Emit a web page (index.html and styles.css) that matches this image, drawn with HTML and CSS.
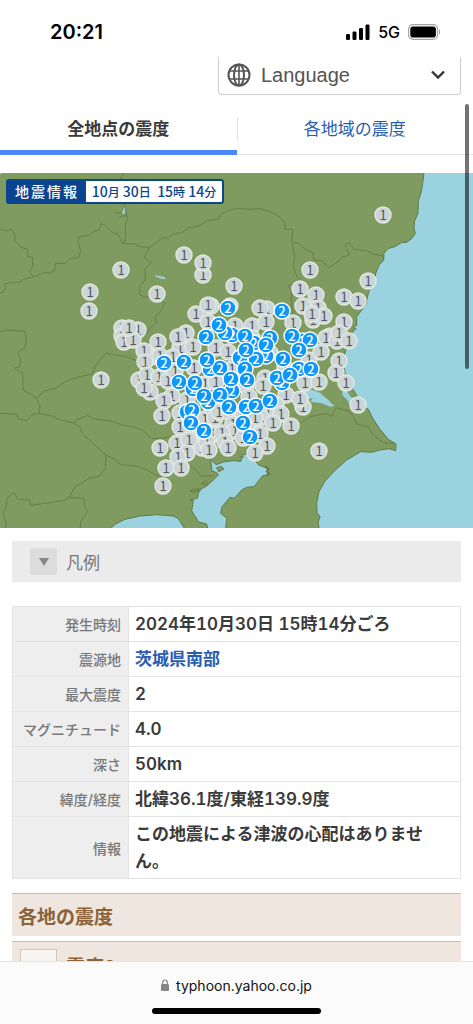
FILE: index.html
```html
<!DOCTYPE html>
<html lang="ja">
<head>
<meta charset="utf-8">
<meta name="viewport" content="width=device-width, initial-scale=1">
<title>地震情報</title>
<link rel="stylesheet" href="styles.css">
</head>
<body>

<header class="status">
  <span class="time">20:21</span>
  <div class="status-right">
    <svg width="24" height="16" viewBox="0 0 24 16">
      <rect x="0" y="10" width="4" height="6" rx="1.2"/>
      <rect x="6.5" y="7.500" width="4" height="8.500" rx="1.2"/>
      <rect x="13" y="4" width="4" height="12" rx="1.2"/>
      <rect x="19.500" y="0.500" width="4" height="15.500" rx="1.2"/>
    </svg>
    <span class="network">5G</span>
    <svg width="33" height="16" viewBox="0 0 33 16">
      <rect x="0.600" y="0.700" width="29" height="14.600" rx="4.500" fill="none" stroke="#a5a5a5" stroke-width="1.200"/>
      <rect x="2.300" y="2.400" width="25.600" height="11.200" rx="2.800"/>
      <path d="M31 5.500v5c1.600-.6 1.600-4.400 0-5z" fill="#a5a5a5"/>
    </svg>
  </div>
</header>

<main class="page">
  <div class="language">
    <svg class="globe" width="24" height="24" viewBox="0 0 24 24" fill="none" stroke="#555" stroke-width="2">
      <circle cx="12" cy="12" r="10.500"/>
      <ellipse cx="12" cy="12" rx="5" ry="10.500"/>
      <path d="M12 1.500v21M2.500 8h19M2.500 16h19" stroke-width="1.600"/>
    </svg>
    <select aria-label="Language">
      <option>Language</option>
    </select>
    <svg class="arrow" width="14" height="10" viewBox="0 0 14 10" fill="none" stroke="#333" stroke-width="2.400">
      <path d="M1 1.500l6 6 6-6"/>
    </svg>
  </div>

  <nav class="tabs">
    <a href="#" class="tab active">全地点の震度</a>
    <a href="#" class="tab">各地域の震度</a>
  </nav>

  <div class="map">
    <svg class="map-svg" viewBox="0 0 473 355">
      <rect width="473" height="355" fill="#7f9b5f"/>
      <g transform="translate(0 -3) scale(0.33333)">
        <!-- sea -->
        <g fill="#9ad3df" stroke="#5f7845" stroke-width="3">
          <path d="M1273 0L1268 40 1264 65 1255 92 1254 130 1244 152 1242 175 1246 190 1236 205 1220 217 1204 218 1184 230 1164 236 1152 250 1151 271 1138 284 1128 308 1120 340 1106 365 1098 402 1082 424 1070 440 1070 466 1060 472 1068 476 1050 494 1045 520 1036 545 1027 575 1035 605 1043 640 1060 660 1078 690 1098 715 1105 718 1118 745 1140 778 1165 808 1188 822 1187 842 1168 836 1140 840 1115 847 1082 845 1040 870 1003 903 975 933 957 965 950 998 951 1028 960 1040 955 1056 958 1090H1440V0z"/>
          <path d="M322 1085L345 1063 375 1048 420 1038 470 1034 520 1038 535 1046 545 1062 560 1085z"/>
          <path d="M625 1085L620 1062 596 1056 575 1022 580 992 570 990 592 985 598 960 620 948 640 930 655 915 650 908 636 903 632 868 648 884 670 876 700 872 722 874 728 856 738 852 755 858 775 884 805 897 803 915 788 917 762 950 740 952 725 960 703 985 690 982 665 1012 662 1030 680 1044 676 1085z"/>
          <path d="M885 665L935 660 945 662 960 668 985 690 1003 708 990 710 965 700 932 695 938 683 918 690 870 690z" stroke="none"/>
          <path d="M1028 660L1042 665 1052 680 1072 690 1060 705 1050 705 1042 690 1027 675z" stroke="none"/>
          <path d="M464 316L492 320 498 328 484 326 468 320zM372 115L376 112 374 132 366 130zM0 0h14l-14 14z" stroke="none"/>
        </g>
        <path d="M650 893l14-4 8 8-16 8zM570 962l24-6 8 5-24 6zM604 940l14-8 6 6-12 7z" fill="#7f9b5f" stroke="#5f7845" stroke-width="3"/>
        <path d="M796 888l10 8-7 8 10 8-10 4" fill="none" stroke="#5f7845" stroke-width="4"/>
        <!-- prefecture borders -->
        <g class="border">
          <path d="M371 0L370 14 360 28 374 45 380 65 381 85 368 95 376 112 382 145 376 165 377 205 371 222M345 128L365 129M358 140L382 136"/>
          <path d="M0 176L15 182 35 178 45 195 45 214 65 232 82 238 83 260 98 262 98 288 88 306 100 321"/>
          <path d="M0 368L10 366 18 352 12 342 35 338 60 336 75 326 100 321 112 317 130 308 150 309 165 300 166 280 195 280 214 265 236 263 242 242 234 218 236 200 268 196 282 183 298 180 302 160 315 166 340 190 352 190 362 208 368 220 385 222 400 220 420 230 448 233 470 218 485 204 505 204 520 192 545 188 565 174 600 166 620 152 655 148 662 132 680 124 710 115 750 118 780 116 808 125 830 134 855 158 855 178 878 178 876 218 895 220 915 236 938 248 942 270 965 272 985 293 1015 275 1025 262 1048 255 1036 226 1045 217 1062 238 1100 242 1120 252 1148 258"/>
          <path d="M448 233L432 262 454 276 436 296 435 330 418 352 420 376 440 382 468 370 494 400 482 425 465 440 468 458 446 480 430 500"/>
          <path d="M878 222L884 260 880 290 890 318 900 330M880 340L864 348 874 362 874 395 880 440"/>
          <path d="M0 486L18 480 76 484 79 510 74 536 54 545 62 568 60 590 42 594 68 610 70 660 84 668 110 686 120 710 118 730M110 686L130 664 165 656 200 632 240 620 278 612 284 590 318 549 350 556 380 560 410 572"/>
          <path d="M0 730L50 732 56 748 82 752 95 735 118 730 155 738 175 748 222 760 230 750 262 736 285 748 330 752 370 766 400 770 430 782 455 806 490 804 540 796"/>
          <path d="M222 760L240 770 246 790 265 808 318 855 316 895 300 918 270 924 240 942 225 950 208 982 250 985 254 1008 262 1025 242 1055 240 1085M318 855L350 870 362 884 410 888 440 900 478 920"/>
          <path d="M208 982L190 992 150 998 92 1006 90 990 55 988 42 968 20 985 20 1005 10 1030 18 1060 16 1085"/>
          <path d="M570 888L590 902 602 918 640 918M905 758L930 740 960 734 980 730 995 740 1003 720 1010 714 1045 722 1060 740 1070 762 1105 770 1120 796 1150 818 1180 822M718 858L732 862"/>
        </g>
      </g>
      <g id="markers"></g>
    </svg>
    <div class="map-title">
      <b>地震情報</b>
      <span>10<small>月</small> 30<small>日</small>&nbsp; 15<small>時</small> 14<small>分</small></span>
    </div>
  </div>

  <div class="legend">
    <button type="button" aria-label="凡例を開く"></button>
    <span>凡例</span>
  </div>

  <table class="info">
    <tr><th>発生時刻</th><td>2024年10月30日 15時14分ごろ</td></tr>
    <tr><th>震源地</th><td><a href="#">茨城県南部</a></td></tr>
    <tr><th>最大震度</th><td>2</td></tr>
    <tr><th>マグニチュード</th><td>4.0</td></tr>
    <tr><th>深さ</th><td>50km</td></tr>
    <tr><th>緯度/経度</th><td>北緯36.1度/東経139.9度</td></tr>
    <tr><th>情報</th><td>この地震による津波の心配はありません。</td></tr>
  </table>

  <h2>各地の震度</h2>
  <h3><span class="box"></span>震度2</h3>
</main>

<div class="scrollbar"></div>

<footer class="browser">
  <div class="url">
    <svg width="8" height="12" viewBox="0 0 8 12">
      <rect y="5" width="8" height="7" rx="1.200" fill="#86868a"/>
      <path d="M1.700 5.500V3.300a2.300 2.300 0 0 1 4.600 0v2.200" fill="none" stroke="#86868a" stroke-width="1.200"/>
    </svg>
    <span>typhoon.yahoo.co.jp</span>
  </div>
  <div class="home"></div>
</footer>

<script src="script.js"></script>
</body>
</html>
```
FILE: styles.css
```css
* {
    box-sizing: border-box;
}

body {
    display: flex;
    flex-direction: column;
    height: 100vh;
    margin: 0;
    overflow: hidden;
    background-color: white;
    color: #3a3a3a;
    font-family: Inter, "Noto Sans CJK JP", sans-serif;
}

a {
    color: #2a5db0;
    text-decoration: none;
}

.status {
    display: flex;
    flex: none;
    justify-content: space-between;
    align-items: center;
    height: 57px;
    padding: 6px 32px 0 50px;
    color: black;
}

.time {
    font-size: 20px;
    font-weight: 600;
}

.status-right {
    display: flex;
    align-items: center;
    gap: 8px;
}

.network {
    font-size: 16px;
    font-weight: 500;
}

.page {
    flex: 1;
    min-height: 0;
    overflow: hidden;
}

/* language select */
.language {
    display: flex;
    align-items: center;
    width: 243px;
    height: 38px;
    margin: 0 12px 9px auto;
    padding: 0 15px 2px 8px;
    border: 1px solid #ccc;
    border-top: none;
    border-radius: 0 0 4px 4px;
}

.language select {
    flex: 1;
    appearance: none;
    padding: 0 0 0 10px;
    border: none;
    background: none;
    color: #555;
    font-family: "Liberation Sans", sans-serif;
    font-size: 20px;
}

/* tabs */
.tabs {
    display: flex;
    height: 51px;
    margin-bottom: 18px;
}

.tab {
    flex: 1;
    border-bottom: 1px solid #e6e6e6;
    font-size: 17px;
    line-height: 51px;
    text-align: center;
    background: linear-gradient(#e6e6e6, #e6e6e6) 0 13px / 1px 24px no-repeat;
}

.tab.active {
    border-bottom: 5px solid #4c87fb;
    background: none;
    color: #3a3a3a;
    font-weight: 600;
}

/* map */
.map {
    position: relative;
}

.map-svg {
    display: block;
    width: 100%;
}

.border {
    fill: none;
    stroke: #64804a;
    stroke-width: 3;
}

.marker circle {
    fill: #cad4d9;
    stroke: #e3e9df;
    stroke-width: 1.4;
}

.marker text {
    fill: #555;
    font-family: "Noto Sans CJK JP", sans-serif;
    font-size: 13px;
    text-anchor: middle;
}

.marker.two circle {
    fill: #0c97fb;
    stroke: white;
}

.marker.two text {
    fill: white;
    font-weight: 500;
}

.map-title {
    position: absolute;
    top: 6px;
    left: 6px;
    display: flex;
    width: 218px;
    height: 25px;
    border: 2px solid #0b458f;
    border-radius: 3px;
    background-color: white;
    color: #0b458f;
    font-family: "Noto Sans CJK JP", sans-serif;
    font-size: 14px;
    font-weight: 500;
    line-height: 20px;
    white-space: nowrap;
}

.map-title b {
    width: 78px;
    background-color: #0b458f;
    color: white;
    font-weight: 500;
    letter-spacing: 2px;
    padding-left: 7px;
}

.map-title span {
    flex: 1;
    text-align: center;
}

.map-title small {
    font-size: 12px;
}

/* legend */
.legend {
    display: flex;
    align-items: center;
    gap: 9px;
    height: 41px;
    margin: 13px 12px 24px;
    padding-left: 18px;
    background-color: #ebebeb;
    color: #777;
    font-size: 17px;
}

.legend button {
    display: grid;
    place-items: center;
    width: 27px;
    height: 27px;
    padding: 0;
    border: none;
    border-radius: 3px;
    background-color: #dcdcdc;
}

.legend button::after {
    content: "";
    border: 5px solid transparent;
    border-top: 8px solid #888;
    border-bottom: none;
}

/* quake data */
.info {
    width: calc(100% - 24px);
    margin: 0 12px 14px;
    border-collapse: collapse;
    table-layout: fixed;
}

.info th, .info td {
    border: 1px solid #e3e3e3;
    font-weight: 600;
}

.info th {
    width: 116px;
    padding: 0 7px 0 0;
    background-color: #eee;
    color: #777;
    font-size: 14px;
    font-weight: 500;
    text-align: right;
    white-space: nowrap;
}

.info td {
    padding: 4px 6px 3px;
    font-size: 17px;
    font-variant-numeric: tabular-nums;
    line-height: 27px;
}

h2, h3 {
    display: flex;
    align-items: center;
    height: 43px;
    margin: 0 12px 5px;
    padding-left: 6px;
    border-top: 1px solid #cbb9ab;
    background-color: #eee6df;
    color: #8c6239;
    font-size: 19px;
    font-weight: 600;
}

h3 {
    gap: 9px;
    height: 48px;
    padding-left: 8px;
}

.box {
    width: 37px;
    height: 34px;
    border: 1px solid #d3c6ba;
    background-color: #f8f4f1;
}

/* browser chrome */
.scrollbar {
    position: absolute;
    top: 104px;
    right: 4px;
    width: 4px;
    height: 265px;
    border-radius: 2px;
    background-color: rgba(0, 0, 0, 0.55);
}

.browser {
    flex: none;
    height: 63px;
    padding-top: 13px;
    border-top: 1px solid #e4e4e4;
    background-color: #fbfbfb;
    color: #111;
}

.url {
    display: flex;
    justify-content: center;
    align-items: center;
    gap: 7px;
    height: 20px;
    font-size: 14px;
}

.home {
    width: 169px;
    height: 6px;
    margin: 13px auto 0;
    border-radius: 3px;
    background-color: black;
}
```
FILE: script.js
```js
// [x, y] on the map, later ones lie on top
var ones = [
    [383,42],[121,97],[90,119],[89,138],[157,121],[184,82],[203,102],[203,90],[234,113],[310,97],
    [368,108],[300,116],[316,122],[344,124],[358,128],[211,133],[196,141],[208,132],[230,133],[122,155],
    [138,157],[122,163],[124,169],[133,167],[129,155],[158,169],[186,160],[180,175],[178,164],[208,149],
    [151,184],[160,183],[144,178],[145,189],[173,184],[193,174],[216,175],[228,179],[235,153],[101,207],
    [139,207],[147,202],[159,204],[150,219],[144,215],[168,208],[175,198],[172,223],[164,228],[187,227],
    [205,211],[216,209],[194,195],[232,196],[267,136],[260,135],[252,153],[266,149],[293,150],[318,135],
    [303,133],[313,147],[324,143],[312,141],[344,149],[330,163],[326,165],[337,168],[339,160],[349,168],
    [309,187],[321,179],[339,188],[336,200],[346,210],[265,205],[263,213],[305,210],[319,209],[252,165],
    [270,180],[285,195],[246,213],[249,224],[286,222],[303,234],[300,226],[358,232],[276,232],[268,239],
    [261,244],[281,241],[273,250],[291,253],[319,278],[162,243],[180,240],[180,254],[196,246],[205,246],
    [212,235],[215,245],[219,239],[230,240],[242,245],[255,245],[233,251],[248,256],[235,258],[243,265],
    [213,261],[222,260],[200,262],[193,272],[202,275],[160,275],[177,270],[189,267],[207,269],[209,277],
    [225,269],[228,275],[187,280],[178,284],[166,295],[181,295],[163,313],[260,261],[267,273],[255,280]
];
var twos = [
    [228,135],[282,138],[232,162],[225,160],[219,152],[206,164],[254,170],[245,163],[270,165],[266,183],
    [266,172],[256,186],[240,185],[246,177],[164,190],[184,189],[210,196],[220,195],[207,187],[303,168],
    [310,167],[292,163],[299,177],[283,186],[299,196],[311,196],[282,210],[277,205],[290,202],[245,196],
    [247,207],[179,209],[193,216],[195,210],[208,229],[204,223],[232,218],[220,222],[231,206],[187,239],
    [192,237],[191,250],[204,258],[229,234],[246,234],[256,233],[270,228],[243,250],[250,264]
];

function drawMarkers(points, label, className) {
    var html = "";
    for (var i = 0; i < points.length; i++) {
        html += '<g class="' + className + '" transform="translate(' + points[i][0] + ',' + points[i][1] + ')">'
            + '<circle r="8"/><text y="5">' + label + '</text></g>';
    }
    return html;
}

document.getElementById("markers").innerHTML =
    drawMarkers(ones, "1", "marker") + drawMarkers(twos, "2", "marker two");
```
